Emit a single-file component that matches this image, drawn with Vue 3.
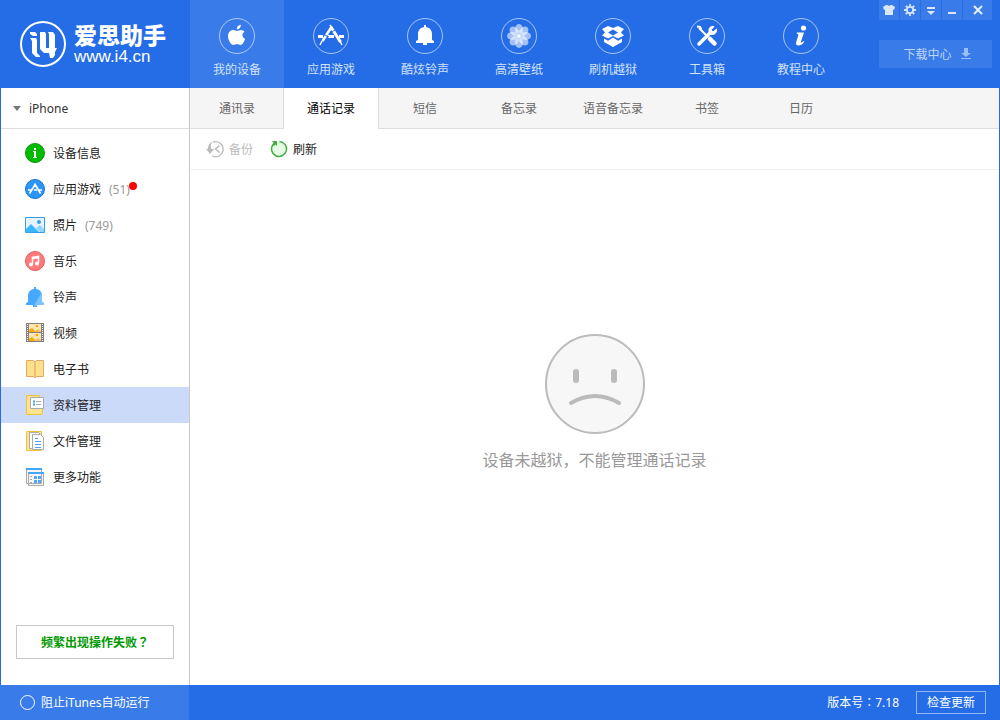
<script setup>
import { ref } from 'vue'

const sections = ['我的设备', '应用游戏', '酷炫铃声', '高清壁纸', '刷机越狱', '工具箱', '教程中心']
const section = ref(0)

const tabs = ['通讯录', '通话记录', '短信', '备忘录', '语音备忘录', '书签', '日历']
const tab = ref(1)

const items = [
  { label: '设备信息' },
  { label: '应用游戏', count: 51, dot: true },
  { label: '照片', count: 749 },
  { label: '音乐' },
  { label: '铃声' },
  { label: '视频' },
  { label: '电子书' },
  { label: '资料管理' },
  { label: '文件管理' },
  { label: '更多功能' },
]
const item = ref(7)
const blockItunes = ref(false)
const petals = [0, 45, 90, 135, 180, 225, 270, 315]
</script>

<template>
  <div class="app">
    <header class="top">
      <div class="brand">
        <svg class="mark" viewBox="0 0 46 46" aria-hidden="true">
          <circle cx="23" cy="23" r="22" fill="none" stroke="#fff" stroke-width="2" />
          <g fill="#fff">
            <path d="M10 11h5l2 2v2h-4l-3-2z" />
            <path d="M10 17h6l1 2v13l3 3v1h-4l-4-4V20z" />
            <path d="M20 11h5l1 2v14h3V13l-1-2h5l2 3v13h2l-2 4v3l-2 3h-3l-1-5h-5l-4-4V14z" />
          </g>
        </svg>
        <div class="words">
          <strong>爱思助手</strong>
          <span>www.i4.cn</span>
        </div>
      </div>

      <nav class="sections">
        <button v-for="(s, i) in sections" :key="s" type="button" :class="{ on: section === i }" @click="section = i">
          <svg viewBox="0 0 36 36" aria-hidden="true">
            <circle cx="18" cy="18" r="17.5" fill="none" stroke="#fff" stroke-opacity=".6" />
            <g v-if="i === 0" fill="#fff">
              <path d="M18 13c1.500 0 2.500-1 4-1 1.400 0 2.800.7 3.500 1.800-3 1.900-2.500 5.700.6 7-.8 2.500-2.500 6.200-4.500 6.200-1.300 0-2-.7-3.600-.7s-2.200.7-3.500.7C12 27 9 22 9 18.200c0-3.800 2.400-6.200 5-6.200 1.500 0 3 1 4 1z" />
              <path d="M17.800 11.500c-.2-2.500 1.500-4.300 4-4.700.2 2.500-1.500 4.700-4 4.700z" />
            </g>
            <g v-else-if="i === 1" stroke="#fff" fill="none">
              <path d="M18.500 9l-9 14" stroke-width="2.500" />
              <path d="M18 9l9.500 15" stroke-width="3" />
              <path d="M5 18.500h5M15 18.500h6M26 18.500h5" stroke-width="3" />
              <path d="M9 23l-2 4M27 23l2 4M17 7l2 3" stroke-width="1.500" />
              <path d="M19 14l4-3M12 17l4 2" stroke="#246de6" stroke-width="1" />
            </g>
            <g v-else-if="i === 2" fill="#fff">
              <path d="M17 7h2v2c4.500.7 6 4 6 7v6l2 1v2H9v-2l2-1v-6c0-3 1.500-6.300 6-7z" />
              <path d="M16 25h4v2h-4z" />
            </g>
            <g v-else-if="i === 3">
              <ellipse v-for="a in petals" :key="a" cx="18" cy="11" rx="3.900" ry="5" fill="#fff" fill-opacity=".58" :transform="`rotate(${a} 18 18)`" />
              <path v-for="a in petals" :key="'l' + a" d="M18 18v-6" stroke="#fff" stroke-opacity=".5" :transform="`rotate(${a} 18 18)`" />
              <circle cx="18" cy="18" r="2" fill="#fff" />
            </g>
            <g v-else-if="i === 4" fill="#fff">
              <path fill-rule="evenodd" d="M13 8l5 2 5-2 6 3-3 3.500 3 3-6 3-5-2.500-5 2.500-6-3 3-3L7 11zM18 11.500l-5 3 5 3 5-3z" />
              <path d="M9 20.500l4 2.300 5-3.300 5 3.300 4-2.300v3.500l-9 5-9-5z" />
            </g>
            <g v-else-if="i === 5" fill="none" stroke="#fff">
              <path d="M10 26l11-11" stroke-width="3.500" stroke-linecap="round" />
              <path d="M27.500 11l-3.500 3-2-2 3-3.500c-3-.7-5.500 1.500-5 4.500-.2 2.500 1.500 4 4 3.500 2.800-.5 4-3 3.500-5.500z" fill="#fff" stroke-width="1" />
              <path d="M10 10l9 9" stroke-width="2" />
              <path d="M8 8.500l3 .5 1.500 2.500" stroke-width="2" />
              <path d="M21 21l4.500 4.500" stroke-width="4.500" stroke-linecap="round" />
            </g>
            <g v-else fill="#fff">
              <circle cx="20.500" cy="10" r="2.600" />
              <path d="M14 14.500h7l-3 9c-.5 1.600.7 1.500 2.500-.5l.8.600c-1.700 3-4 4-6 4-2 0-2.700-1.500-2.100-3.500l2-6.300c.4-1.300 0-1.800-1.500-1.800z" />
            </g>
          </svg>
          <span>{{ s }}</span>
        </button>
      </nav>

      <div class="tools">
        <div class="window">
          <button type="button" aria-label="皮肤">
            <svg viewBox="0 0 12 12"><path d="M0 3l3-2h1.500c.5 1 2.500 1 3 0H9l3 2-1 3-1-.5V11H2V5.500L1 6z" fill="#d9e6fb" /></svg>
          </button>
          <button type="button" aria-label="设置">
            <svg viewBox="0 0 12 12" fill="none" stroke="#d9e6fb">
              <circle cx="6" cy="6" r="3.200" stroke-width="1.800" />
              <path d="M6 0v2M6 10v2M0 6h2M10 6h2M1.800 1.800l1.500 1.500M8.700 8.700l1.500 1.500M1.800 10.200l1.500-1.500M8.700 3.300l1.500-1.500" stroke-width="1.800" />
            </svg>
          </button>
          <button type="button" aria-label="菜单">
            <svg viewBox="0 0 12 12" fill="#d9e6fb"><path d="M2 3h8v2H2zM2 7h8l-4 4z" /></svg>
          </button>
          <button type="button" aria-label="最小化">
            <svg viewBox="0 0 12 12" fill="#d9e6fb"><path d="M2 8h8v2H2z" /></svg>
          </button>
          <button type="button" class="close" aria-label="关闭">
            <svg viewBox="0 0 12 12" fill="none" stroke="#e6effc" stroke-width="2"><path d="M2 2l8 8M10 2l-8 8" /></svg>
          </button>
        </div>
        <button type="button" class="downloads">
          <span>下载中心</span>
          <svg viewBox="0 0 12 12" fill="#9bbef4"><path d="M4 0h4v5h3L6 9 1 5h3zM1 10h10v1H1z" /></svg>
        </button>
      </div>
    </header>

    <div class="body">
      <aside class="side">
        <button type="button" class="device">
          <svg viewBox="0 0 8 5" aria-hidden="true"><path d="M0 0h8L4 5z" fill="#777" /></svg>
          <span>iPhone</span>
        </button>
        <nav class="list">
          <button v-for="(m, i) in items" :key="m.label" type="button" :class="{ on: item === i }" @click="item = i">
            <svg viewBox="0 0 20 20" aria-hidden="true">
              <g v-if="i === 0">
                <circle cx="10" cy="10" r="9.500" fill="#0b0" stroke="#0a990a" />
                <path d="M9 5h2v2H9zM8 8h3v6h1v1H8v-1h1V9H8z" fill="#fff" />
              </g>
              <g v-else-if="i === 1" fill="none">
                <circle cx="10" cy="10" r="9.500" fill="#2b95fb" stroke="#1976c8" />
                <path d="M10.500 5l-6 9.500M9.500 4.500l6 10M3 11h4M9 11h3M14 11h3" stroke="#fff" stroke-width="1.700" />
              </g>
              <g v-else-if="i === 2">
                <path d="M.500 2.500h19v15H.500z" fill="#e6f3ff" stroke="#369de9" />
                <path d="M1 14l5-5 8 8H1z" fill="#3ab5ff" />
                <path d="M11 13l4-3 4 4v3h-4z" fill="#91d5ff" />
                <circle cx="14" cy="7" r="2" fill="#36a4ed" />
              </g>
              <g v-else-if="i === 3">
                <circle cx="10" cy="10" r="9.500" fill="#ff7b7b" stroke="#e65b5b" />
                <path d="M7.500 13V6.500l6-1V12M7.500 7.500l6-1" fill="none" stroke="#fff" stroke-width="1.500" />
                <circle cx="6" cy="13.500" r="2" fill="#fff" /><circle cx="12" cy="12.500" r="2" fill="#fff" />
              </g>
              <g v-else-if="i === 4">
                <path d="M9 0h2v2c4 .7 6 3 6 7v6l2 1v2h-7v2H8v-2H1v-2l2-1V9c0-4 2-6.300 6-7z" fill="#45aaff" />
                <path d="M16 6q1 1 1 3v6l2 1v2h-7v1h-3z" fill="#7bc2ff" />
              </g>
              <g v-else-if="i === 5">
                <path d="M1 0h18v19H1z" fill="#808080" />
                <path d="M4 1h12v8H4zM4 10h12v8H4z" fill="#ffe5b0" />
                <path d="M4 9V7l3-2 3 3v1zM4 18v-2l3-2 3 3v1zM11 2h2v2h-2zM11 11h2v2h-2z" fill="#ffa500" />
                <path d="M9 9l4-3 3 2v1zM9 18l4-3 3 2v1z" fill="#f5bd62" />
                <path d="M2.500 1v18M17.500 1v18" stroke="#fff" stroke-dasharray="1 1" />
              </g>
              <g v-else-if="i === 6" fill="#ffe08b" stroke="#e4a867">
                <path d="M1.500 1.500h7L10 3l1.500-1.500h7v16h-7L10 19l-1.500-1.500h-7z" />
                <path d="M10 3v15" stroke-width="2" stroke="#efbc7d" />
              </g>
              <g v-else-if="i === 7">
                <path d="M1.500.500h13v3h3v15h-1v1h-15z" fill="#ffe391" stroke="#ecc33d" />
                <path d="M5.500 2.500h13v11h-13z" fill="#fff" stroke="#aaa" />
                <path d="M8 6.500h2M8 9.500h2" stroke="#36a4f5" stroke-width="2" />
                <path d="M11 6.500h5M11 9.500h5" stroke="#aaa" />
              </g>
              <g v-else-if="i === 8">
                <path d="M1.500.500h15v19h-15z" fill="#ffe391" stroke="#ecc33d" />
                <path d="M4.500 1.500h9l2 2v14h-11z" fill="#fff" stroke="#aaa" />
                <path d="M7.500 3.500h8l3 3v12h-11z" fill="#fff" stroke="#aaa" />
                <path d="M10 7.500h3M10 10.500h6M10 13.500h6M10 16.500h6" stroke="#4d9eff" />
              </g>
              <g v-else>
                <path d="M1.500 2.500h15v14h-15zM3.500 6.500h15v12h-15z" fill="#f5f5f5" stroke="#aaa" />
                <path d="M1 1h16v2H1zM3 5h16v2H3z" fill="#43a6f8" />
                <path d="M9 9h3v3H9zM13 9h3v3h-3zM9 13h3v3H9zM13 13h3v3h-3z" fill="#4ba8ff" />
                <path d="M5 9.500h2M5 12.500h2M5 15.500h2" stroke="#aaa" />
              </g>
            </svg>
            <span>{{ m.label }}</span>
            <small v-if="m.count">({{ m.count }})<i v-if="m.dot" class="dot"></i></small>
          </button>
        </nav>
        <button type="button" class="help">频繁出现操作失败<span class="punct">？</span></button>
      </aside>

      <main class="main">
        <nav class="tabs">
          <button v-for="(t, i) in tabs" :key="t" type="button" :class="{ on: tab === i }" @click="tab = i">{{ t }}</button>
        </nav>
        <div class="bar">
          <button type="button" disabled>
            <svg viewBox="0 0 18 18" fill="none" stroke="#bbb" aria-hidden="true">
              <path d="M7 2.200a7.500 7.500 0 1 1-1 13.600" stroke-width="1.300" />
              <path d="M9 1C5 2 4 5 5.500 9H8l-4 5-4-5h2C2 5 4 2 9 1z" fill="#bbb" stroke="none" />
              <path d="M13.500 5.500L9.500 9l4 3.500" stroke-width="1.500" />
            </svg>
            <span>备份</span>
          </button>
          <button type="button">
            <svg viewBox="0 0 18 18" aria-hidden="true">
              <path d="M9.500 1.500a7.500 7.500 0 1 1-6.500 3" fill="#e6fbe3" stroke="#43ad43" stroke-width="1.500" />
              <path d="M2 1h5v5L5.500 4.500 4 6 2.500 4.500 3.500 3z" fill="#43ad43" />
            </svg>
            <span>刷新</span>
          </button>
        </div>
        <section class="empty">
          <svg viewBox="0 0 100 100" aria-hidden="true">
            <circle cx="50" cy="50" r="49" fill="#f7f7f7" stroke="#bbb" stroke-width="2" />
            <path d="M31 38v8M69 38v8" stroke="#bbb" stroke-width="6" stroke-linecap="round" />
            <path d="M26 69q24-14 48 0" fill="none" stroke="#bbb" stroke-width="4" stroke-linecap="round" />
          </svg>
          <p>设备未越狱，不能管理通话记录</p>
        </section>
      </main>
    </div>

    <footer class="foot">
      <label class="block"><input v-model="blockItunes" type="checkbox" /><span>阻止iTunes自动运行</span></label>
      <div class="version">
        <span>版本号<span class="punct">：</span>7.18</span>
        <button type="button">检查更新</button>
      </div>
    </footer>
  </div>
</template>

<style>
body {
  margin: 0;
}
</style>

<style scoped>
.app {
  display: flex;
  flex-direction: column;
  min-height: 100vh;
  background: #246de6;
  color: #222;
  font: 12px/18px "Noto Sans", "Noto Sans CJK SC", sans-serif;
}
* {
  box-sizing: border-box;
}
button {
  margin: 0;
  padding: 0;
  border: 0;
  background: none;
  color: inherit;
  font: inherit;
  cursor: pointer;
}
svg {
  display: block;
  flex: none;
}
.punct {
  font-family: "Noto Sans CJK TC", sans-serif;
  line-height: 1;
}
.top {
  display: flex;
  height: 88px;
}
.brand {
  display: flex;
  flex: none;
  gap: 8px;
  width: 190px;
  padding: 21px 0 0 20px;
  color: #fff;
}
.mark {
  width: 46px;
  height: 46px;
}
.words {
  display: flex;
  flex-direction: column;
}
.words strong {
  font: 900 23px/30px "Liberation Sans", "Noto Sans CJK SC", sans-serif;
}
.words span {
  font: 17px/12px "Liberation Sans", sans-serif;
}
.sections {
  display: flex;
  flex: 1;
}
.sections button {
  display: flex;
  flex-direction: column;
  align-items: center;
  gap: 7px;
  width: 94px;
  padding-top: 18px;
  color: #d3e2fa;
}
.sections button.on {
  background: #397ce9;
}
.sections svg {
  width: 36px;
  height: 36px;
}
.tools {
  display: flex;
  flex-direction: column;
  gap: 20px;
  width: 113px;
  margin-right: 8px;
}
.window {
  display: flex;
  gap: 1px;
}
.window button {
  display: flex;
  align-items: center;
  justify-content: center;
  width: 20px;
  height: 20px;
  background: #397ce9;
}
.window .close {
  flex: 1;
}
.window svg,
.downloads svg {
  width: 12px;
  height: 12px;
}
.downloads {
  display: flex;
  align-items: center;
  justify-content: center;
  gap: 8px;
  height: 28px;
  padding-left: 4px;
  background: #397ce9;
  color: #bed5f8;
}
.device span,
.downloads span,
.list span,
.list small,
.bar span {
  padding-top: 2px;
}
.body {
  display: flex;
  flex: 1;
  margin: 0 1px;
  background: #fff;
}
.side {
  display: flex;
  flex: none;
  flex-direction: column;
  width: 189px;
  border-right: 1px solid #c8c8c8;
}
.device {
  display: flex;
  align-items: center;
  gap: 8px;
  height: 41px;
  padding-left: 12px;
  border-bottom: 1px solid #ddd;
  color: #333;
}
.device svg {
  width: 8px;
  height: 5px;
}
.list {
  display: flex;
  flex: 1;
  flex-direction: column;
  padding-top: 6px;
}
.list button {
  display: flex;
  align-items: center;
  gap: 8px;
  height: 36px;
  padding-left: 24px;
}
.list button.on {
  background: #cadaf8;
}
.list svg {
  width: 20px;
  height: 20px;
}
.list small {
  position: relative;
  color: #999;
  font-size: 12px;
}
.dot {
  position: absolute;
  top: 3px;
  right: -7px;
  width: 8px;
  height: 8px;
  border-radius: 50%;
  background: #f00;
}
.help {
  height: 34px;
  margin: 0 15px 26px;
  padding-top: 2px;
  border: 1px solid #c8c8c8;
  color: #090;
  font-weight: 700;
}
.main {
  display: flex;
  flex: 1;
  flex-direction: column;
}
.tabs {
  display: flex;
  height: 41px;
  border-bottom: 1px solid #ddd;
  background: #f5f5f5;
}
.tabs button {
  width: 94px;
  height: 41px;
  color: #666;
}
.tabs button.on {
  width: 96px;
  margin: 0 -1px;
  border: solid #ddd;
  border-width: 0 1px;
  background: #fff;
  color: #000;
}
.bar {
  display: flex;
  align-items: center;
  gap: 17px;
  height: 41px;
  padding-left: 16px;
  border-bottom: 1px solid #f0f0f0;
}
.bar button {
  display: flex;
  align-items: center;
  gap: 5px;
}
.bar button:disabled {
  color: #bbb;
}
.bar svg {
  width: 18px;
  height: 18px;
}
.empty {
  display: flex;
  flex: 1;
  flex-direction: column;
  align-items: center;
  justify-content: center;
  gap: 14px;
  padding-bottom: 50px;
}
.empty svg {
  width: 100px;
  height: 100px;
}
.empty p {
  margin: 0;
  color: #999;
  font-size: 16px;
  line-height: 24px;
}
.foot {
  display: flex;
  justify-content: space-between;
  height: 35px;
  color: #fff;
}
.block {
  display: flex;
  align-items: center;
  gap: 6px;
  width: 189px;
  padding-left: 20px;
  background: #397ce9;
}
.block input {
  width: 15px;
  height: 15px;
  margin: 0;
  border: 1px solid #fff;
  border-radius: 50%;
  appearance: none;
}
.block input:checked {
  background: #fff;
}
.version {
  display: flex;
  align-items: center;
  gap: 17px;
  padding-right: 14px;
}
.version button {
  width: 70px;
  height: 23px;
  border: 1px solid #91b6f2;
}
</style>
